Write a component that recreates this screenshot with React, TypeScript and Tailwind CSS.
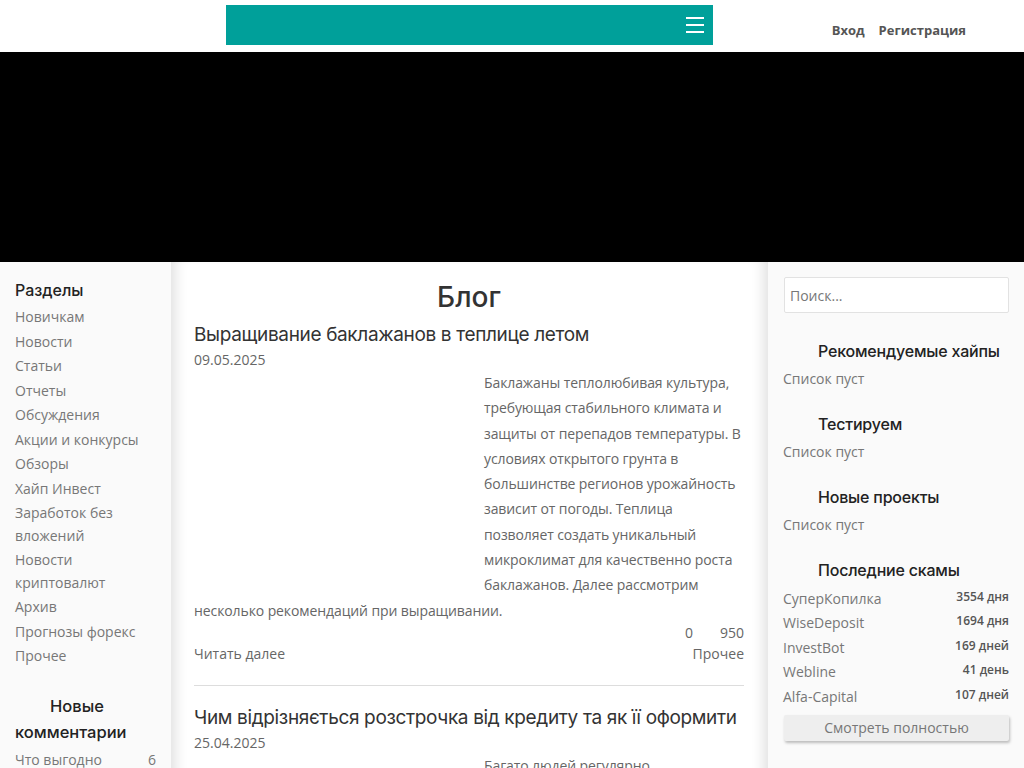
import React from "react";

const heading = { fontFamily: "Inter, 'Noto Sans', sans-serif" } as React.CSSProperties;
const body = { fontFamily: "'Open Sans', 'Noto Sans', sans-serif" } as React.CSSProperties;

const sections = [
  "Новичкам",
  "Новости",
  "Статьи",
  "Отчеты",
  "Обсуждения",
  "Акции и конкурсы",
  "Обзоры",
  "Хайп Инвест",
  "Заработок без вложений",
  "Новости криптовалют",
  "Архив",
  "Прогнозы форекс",
  "Прочее",
];

const scams = [
  ["СуперКопилка", "3554 дня"],
  ["WiseDeposit", "1694 дня"],
  ["InvestBot", "169 дней"],
  ["Webline", "41 день"],
  ["Alfa-Capital", "107 дней"],
];

function Post({
  title,
  date,
  text,
  comments,
  views,
  cat,
}: {
  title: string;
  date: string;
  text: string;
  comments: string;
  views: string;
  cat: string;
}) {
  return (
    <div className="pb-[20px]">
      <h2 className="text-[19px] leading-[26px] text-[#333] font-normal tracking-[-0.35px] whitespace-nowrap" style={heading}>
        {title}
      </h2>
      <div className="text-[14px] leading-[24px] text-[#666]" style={body}>
        {date}
      </div>
      <div className="text-[14px] leading-[25.3px] text-[#666] mt-[-2px] tracking-[-0.1px]" style={body}>
        <div className="float-left w-[275px] h-[215px] mr-[15px]" />
        <p>{text}</p>
      </div>
      <div className="clear-both flex justify-end gap-[27px] text-[14px] leading-[20px] text-[#666]" style={body}>
        <span>{comments}</span>
        <span>{views}</span>
      </div>
      <div className="flex justify-between text-[14px] leading-[22px] text-[#666]" style={body}>
        <span>Читать далее</span>
        <span>{cat}</span>
      </div>
    </div>
  );
}

export default function App() {
  return (
    <div className="w-[1024px] bg-white" style={body}>
      {/* header */}
      <div className="h-[52px] flex items-start">
        <div className="ml-[226px] mt-[5px] w-[487px] h-[40px] bg-[#00a09a] flex items-center justify-end pr-[9px]">
          <div className="flex flex-col gap-[5px]">
            <div className="w-[18px] h-[2px] bg-white" />
            <div className="w-[18px] h-[2px] bg-white" />
            <div className="w-[18px] h-[2px] bg-white" />
          </div>
        </div>
        <div className="flex-1 flex justify-end gap-[14px] pr-[58px] pt-[20px] text-[13px] leading-[20px] font-bold text-[#555]">
          <span>Вход</span>
          <span>Регистрация</span>
        </div>
      </div>
      {/* banner */}
      <div className="h-[210px] bg-black" />
      {/* columns */}
      <div className="flex items-stretch">
        <aside className="w-[171px] shrink-0 bg-[#fafafa] px-[15px] pt-[16px]">
          <h3 className="text-[16px] leading-[24px] font-medium text-[#222] mb-[4px]" style={heading}>
            Разделы
          </h3>
          <ul className="text-[14px] leading-[22.5px] text-[#777]">
            {sections.map((s) => (
              <li key={s} className="mb-[2px]">
                {s}
              </li>
            ))}
          </ul>
          <h3
            className="mt-[25px] text-[16.5px] leading-[26px] font-medium text-[#222] indent-[35px]"
            style={heading}
          >
            Новые комментарии
          </h3>
          <div className="mt-[4px] flex justify-between text-[14px] leading-[22px] text-[#777]">
            <span>Что выгодно</span>
            <span>6</span>
          </div>
          <div className="text-[14px] leading-[22px] text-[#777]">покупать</div>
        </aside>

        <main className="flex-1 bg-white pl-[23px] pr-[24px] pt-[16px] shadow-[inset_14px_0_14px_-10px_rgba(0,0,0,0.13),inset_-14px_0_14px_-10px_rgba(0,0,0,0.13)]">
          <h1 className="text-center text-[28px] leading-[38px] font-medium text-[#333]" style={heading}>
            Блог
          </h1>
          <div className="mt-[6px]">
            <Post
              title="Выращивание баклажанов в теплице летом"
              date="09.05.2025"
              text="Баклажаны теплолюбивая культура, требующая стабильного климата и защиты от перепадов температуры. В условиях открытого грунта в большинстве регионов урожайность зависит от погоды. Теплица позволяет создать уникальный микроклимат для качественно роста баклажанов. Далее рассмотрим несколько рекомендаций при выращивании."
              comments="0"
              views="950"
              cat="Прочее"
            />
            <div className="border-t border-[#ddd] pt-[19px]">
              <Post
                title="Чим відрізняється розстрочка від кредиту та як її оформити"
                date="25.04.2025"
                text="Багато людей регулярно зіштовхуються з ситуацією, коли потрібно придбати дорогу річ, але не вистачає коштів. У такому випадку на допомогу приходять розстрочка та кредит. Розглянемо, чим вони відрізняються."
                comments="0"
                views="812"
                cat="Прочее"
              />
            </div>
          </div>
        </main>

        <aside className="w-[256px] shrink-0 bg-[#fafafa] px-[15px] pt-[15px] pb-[30px]">
          <div className="ml-[1px] h-[36px] border border-[#e2e2e2] rounded-[2px] bg-white flex items-center px-[5px] text-[14px] text-[#777]">
            Поиск...
          </div>
          {["Рекомендуемые хайпы", "Тестируем", "Новые проекты"].map((h, i) => (
            <div key={h} className={i === 0 ? "mt-[26px]" : "mt-[22px]"}>
              <h3
                className="text-[16px] leading-[24px] font-medium text-[#222] indent-[35px] whitespace-nowrap tracking-[-0.2px]"
                style={heading}
              >
                {h}
              </h3>
              <div className="text-[14px] leading-[22px] text-[#777] mt-[5px]">Список пуст</div>
            </div>
          ))}
          <div className="mt-[22px]">
            <h3
              className="text-[16px] leading-[24px] font-medium text-[#222] indent-[35px] whitespace-nowrap tracking-[-0.2px]"
              style={heading}
            >
              Последние скамы
            </h3>
            <div className="mt-[5px]">
              {scams.map(([n, d]) => (
                <div key={n} className="flex justify-between items-start h-[24.4px] text-[#777]">
                  <span className="text-[14px] leading-[24px]">{n}</span>
                  <span className="text-[12px] leading-[20px] font-semibold text-[#555]">{d}</span>
                </div>
              ))}
            </div>
            <div className="mt-[6px] ml-[1px] h-[26px] bg-[#eeeeee] rounded-[2px] shadow-[1px_2px_3px_rgba(0,0,0,0.25)] flex items-center justify-center text-[14px] text-[#777]">
              Смотреть полностью
            </div>
          </div>
        </aside>
      </div>
    </div>
  );
}
